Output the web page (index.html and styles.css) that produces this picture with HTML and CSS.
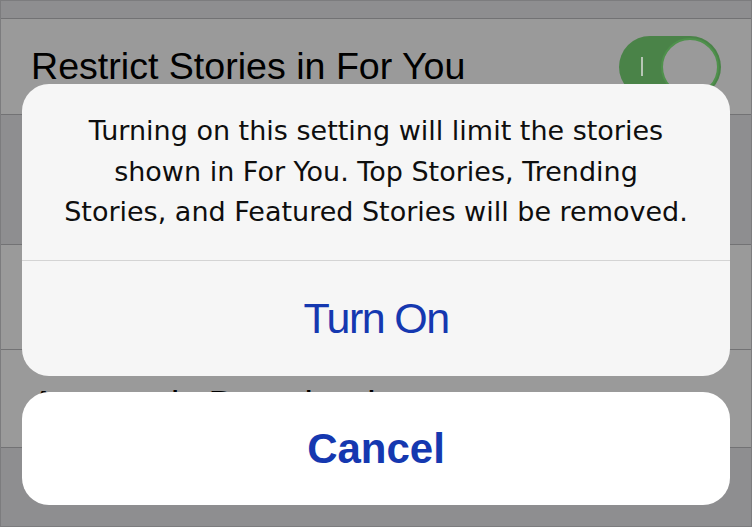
FILE: index.html
```html
<!DOCTYPE html>
<html lang="en">

<head>
    <meta charset="UTF-8">
    <meta name="viewport" content="width=device-width, initial-scale=1.0">
    <title>Restrict Stories</title>
    <link rel="stylesheet" href="styles.css">
</head>

<body>
    <div class="screen">
        <div class="settings">
            <div class="gap gap_top"></div>
            <div class="row row_first">
                <span class="label">Restrict Stories in For You</span>
                <div class="switch">
                    <span class="mark"></span>
                    <span class="knob"></span>
                </div>
            </div>
            <div class="gap gap_mid"></div>
            <div class="row row_second"></div>
            <div class="row row_third">
                <span class="label">Automatic Downloads</span>
                <svg class="chevron" width="14" height="24" viewBox="0 0 14 24">
                    <polyline points="2,2 12,12 2,22" fill="none" stroke="#77777a" stroke-width="3" stroke-linecap="round" stroke-linejoin="round"/>
                </svg>
            </div>
            <div class="gap gap_bottom"></div>
        </div>

        <!-- action sheet sits over the dimmed settings list -->
        <div class="sheet">
            <div class="alert">
                <p class="message">Turning on this setting will limit the stories<br>shown in For You. Top Stories, Trending<br>Stories, and Featured Stories will be removed.</p>
                <button class="action turn_on">Turn On</button>
            </div>
            <button class="action cancel">Cancel</button>
        </div>
    </div>
</body>

</html>
```

FILE: styles.css
```css
* {
    margin: 0;
    padding: 0;
    box-sizing: border-box;
}

body {
    font-family: "Liberation Sans", Arial, sans-serif;
    background-color: #8e8e90;
}

.screen {
    position: relative;
    width: 752px;
    height: 527px;
    overflow: hidden;
    border: 1px solid #7c7c7e;
    background-color: #8e8e90;
}

.settings {
    display: flex;
    flex-direction: column;
}

.gap_top {
    height: 17px;
}

.gap_mid {
    height: 129px;
}

.gap_bottom {
    flex: 1;
}

.row {
    display: flex;
    align-items: center;
    padding: 0 30px 0 30px;
    background-color: #9a9a9a;
    border-top: 1px solid #727274;
}

.row_first {
    height: 97px;
    border-bottom: 1px solid #727274;
}

.row_second {
    height: 105px;
}

.row_third {
    height: 99px;
    padding-top: 12px;
    border-bottom: 1px solid #727274;
}

.label {
    font-size: 37.6px;
    color: #000;
    white-space: nowrap;
}

.switch {
    display: flex;
    align-items: center;
    margin-left: auto;
    width: 102px;
    height: 62px;
    padding: 2px;
    border-radius: 31px;
    background-color: #4a8348;
}

.switch .mark {
    display: block;
    width: 2px;
    height: 19px;
    margin-left: 20px;
    background-color: #b7c6b5;
}

.switch .knob {
    display: block;
    margin-left: auto;
    width: 58px;
    height: 58px;
    border-radius: 50%;
    border: 2px solid #4f914c;
    background-color: #9a9a9a;
}

.chevron {
    margin-left: auto;
    margin-right: 4px;
}

.sheet {
    position: absolute;
    left: 21px;
    right: 21px;
    bottom: 21px;
    display: flex;
    flex-direction: column;
    gap: 16px;
}

.alert {
    display: flex;
    flex-direction: column;
    height: 292px;
    border-radius: 27px;
    background-color: #f6f6f6;
    overflow: hidden;
}

.message {
    display: flex;
    align-items: center;
    justify-content: center;
    height: 177px;
    padding: 0 10px;
    border-bottom: 1px solid #d4d4d4;
    font-family: "DejaVu Sans", sans-serif;
    font-size: 27px;
    line-height: 40.5px;
    text-align: center;
    white-space: nowrap;
    color: #0e0e0e;
}

.action {
    display: flex;
    align-items: center;
    justify-content: center;
    width: 100%;
    border: none;
    outline: none;
    background: none;
    font-family: "Liberation Sans", Arial, sans-serif;
    color: #1538b0;
    cursor: pointer;
}

.turn_on {
    flex: 1;
    font-size: 43px;
    letter-spacing: -1.6px;
}

.cancel {
    height: 113px;
    border-radius: 27px;
    background-color: #fff;
    font-size: 42px;
    font-weight: bold;
}
```
